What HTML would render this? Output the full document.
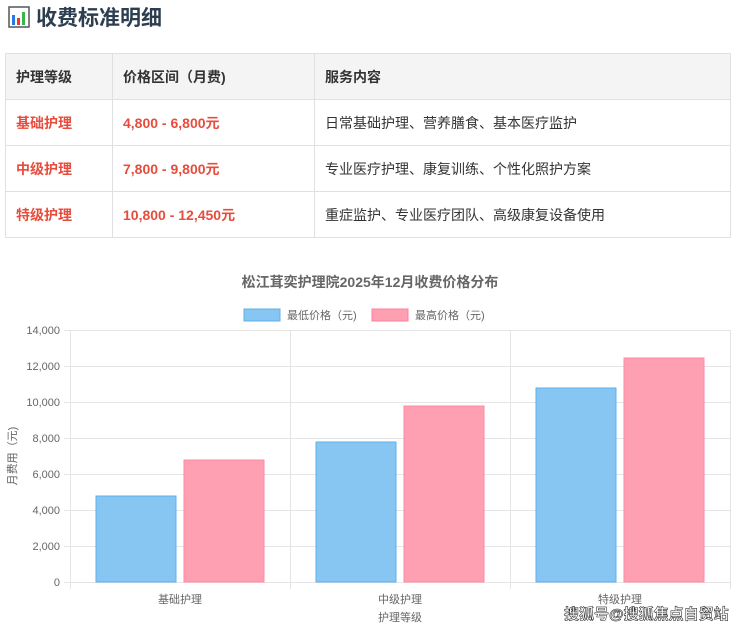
<!DOCTYPE html>
<html><head><meta charset="utf-8"><style>
body{margin:0;width:740px;height:630px;background:#fff;font-family:"Liberation Sans","Noto Sans CJK SC",sans-serif;position:relative;overflow:hidden}
h1{position:absolute;left:8px;top:3px;margin:0;font-size:21px;font-weight:bold;color:#2c3e50;line-height:32px}
table{position:absolute;left:5px;top:53px;width:726px;border-collapse:collapse;font-size:14px}
td,th{border:1px solid #e0e0e0;height:45px;padding:0 0 0 10px;text-align:left}
th{background:#f4f4f4;color:#333;font-weight:bold}
td{color:#333}
.r{color:#e74c3c;font-weight:bold}
</style></head><body>
<h1><svg width="22" height="22" viewBox="0 0 22 22" style="vertical-align:-3px;margin-right:6px"><rect x="1" y="1" width="20" height="20" fill="#fff" stroke="#555" stroke-width="1.5"/><rect x="4" y="9" width="3" height="10" fill="#2a7ae2"/><rect x="9" y="12" width="3" height="7" fill="#e63b2e"/><rect x="14" y="6" width="3" height="13" fill="#3bb54a"/></svg>收费标准明细</h1>
<table>
<tr><th style="width:96px">护理等级</th><th style="width:191px">价格区间（月费)</th><th>服务内容</th></tr>
<tr><td class="r">基础护理</td><td class="r">4,800 - 6,800元</td><td>日常基础护理、营养膳食、基本医疗监护</td></tr>
<tr><td class="r">中级护理</td><td class="r">7,800 - 9,800元</td><td>专业医疗护理、康复训练、个性化照护方案</td></tr>
<tr><td class="r">特级护理</td><td class="r">10,800 - 12,450元</td><td>重症监护、专业医疗团队、高级康复设备使用</td></tr>
</table>
<svg width="740" height="630" style="position:absolute;left:0;top:0" font-family="Liberation Sans,Noto Sans CJK SC,sans-serif">
<text x="370" y="287" text-anchor="middle" font-size="14" font-weight="bold" fill="#666">松江茸奕护理院2025年12月收费价格分布</text>
<rect x="244" y="309" width="36" height="12" fill="#87c6f2" stroke="#5eb0ea"/>
<text x="287" y="319" font-size="11" fill="#666">最低价格（元)</text>
<rect x="372" y="309" width="36" height="12" fill="#ff9fb2" stroke="#ff7f99"/>
<text x="415" y="319" font-size="11" fill="#666">最高价格（元)</text>
<g stroke="#e5e5e5" stroke-width="1">
<line x1="64" y1="330.5" x2="730" y2="330.5"/><line x1="64" y1="366.5" x2="730" y2="366.5"/><line x1="64" y1="402.5" x2="730" y2="402.5"/><line x1="64" y1="438.5" x2="730" y2="438.5"/><line x1="64" y1="474.5" x2="730" y2="474.5"/><line x1="64" y1="510.5" x2="730" y2="510.5"/><line x1="64" y1="546.5" x2="730" y2="546.5"/><line x1="64" y1="582.5" x2="730" y2="582.5"/>
<line x1="70.5" y1="330" x2="70.5" y2="589"/><line x1="290.5" y1="330" x2="290.5" y2="589"/><line x1="510.5" y1="330" x2="510.5" y2="589"/><line x1="730.5" y1="330" x2="730.5" y2="589"/>
</g>
<g font-size="11" fill="#666" text-anchor="end">
<text x="60" y="334">14,000</text><text x="60" y="370">12,000</text><text x="60" y="406">10,000</text><text x="60" y="442">8,000</text><text x="60" y="478">6,000</text><text x="60" y="514">4,000</text><text x="60" y="550">2,000</text><text x="60" y="586">0</text>
</g>
<text transform="translate(16,456) rotate(-90)" text-anchor="middle" font-size="11" fill="#666">月费用（元)</text>
<g fill="#87c6f2" stroke="#5eb0ea"><rect x="96" y="496" width="80" height="86"/><rect x="316" y="442" width="80" height="140"/><rect x="536" y="388" width="80" height="194"/></g>
<g fill="#ff9fb2" stroke="#ff8aa3"><rect x="184" y="460" width="80" height="122"/><rect x="404" y="406" width="80" height="176"/><rect x="624" y="358" width="80" height="224"/></g>
<g font-size="11" fill="#666" text-anchor="middle"><text x="180" y="603">基础护理</text><text x="400" y="603">中级护理</text><text x="620" y="603">特级护理</text><text x="400" y="621">护理等级</text></g>
<text x="564" y="619" font-size="15" font-weight="bold" fill="#fff" stroke="#333" stroke-width="0.6">搜狐号@搜狐焦点自贸站</text>
</svg>
</body></html>
